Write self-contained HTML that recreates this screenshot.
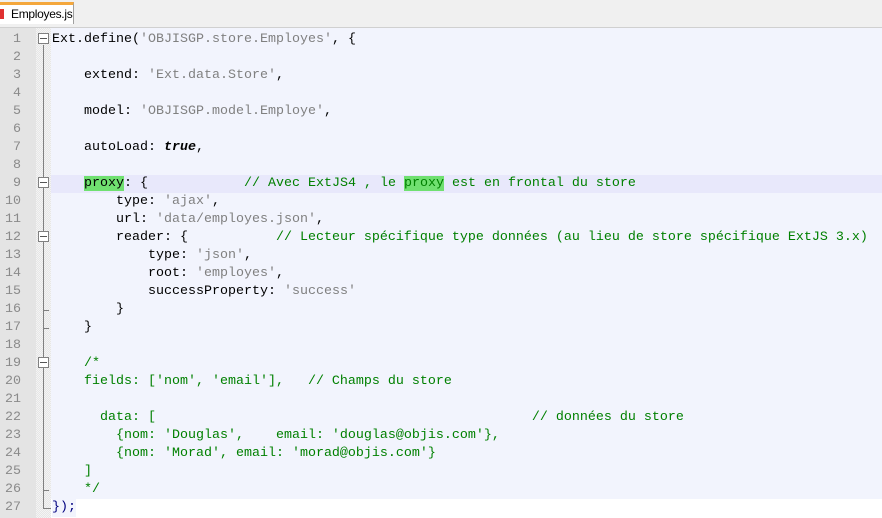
<!DOCTYPE html>
<html><head><meta charset="utf-8"><style>
body{margin:0;width:882px;height:518px;overflow:hidden;background:#fff;position:relative;font-family:"Liberation Mono",monospace}
.tabbar{position:absolute;left:0;top:0;width:882px;height:28px;background:#f0f0f0;border-bottom:1px solid #d0d0d0;box-sizing:border-box}
.tab{position:absolute;left:-1px;top:2px;width:75px;height:22px;background:#fff;border:1px solid #a0a0a0;border-top:3px solid #f4a73c;border-bottom:none;box-sizing:border-box;font:12px "Liberation Sans",sans-serif;line-height:18px;padding-left:11px;letter-spacing:-0.3px}
.tab i{position:absolute;left:0;top:4px;width:4px;height:10px;background:#e03030}
.gut{position:absolute;left:0;top:28px;width:36px;height:490px;background:#e4e4e4}
.fold{position:absolute;left:36px;top:28px;width:15px;height:490px;background-color:#f4f4f4;background-image:linear-gradient(45deg,#e6e6e6 25%,transparent 25%,transparent 75%,#e6e6e6 75%),linear-gradient(45deg,#e6e6e6 25%,transparent 25%,transparent 75%,#e6e6e6 75%);background-size:2px 2px;background-position:0 0,1px 1px}
.code{position:absolute;left:51px;top:28px;width:831px;height:471px;background:#f2f4fd}
.l{position:absolute;left:0;height:18px;line-height:18px;font-size:13.33px;white-space:pre;width:882px}
.n{position:absolute;left:0;width:21px;text-align:right;color:#8a8a8a;font-size:13.33px;line-height:18px}
.t{position:absolute;left:52px;color:#000}
.s{color:#808080}.c{color:#008000}.k{font-weight:bold;font-style:italic}
.hl{background:#70e070}
.box{position:absolute;left:38px;width:11px;height:11px;border:1px solid #808080;background:#fff;box-sizing:border-box}
.box:after{content:"";position:absolute;left:1px;top:4px;width:7px;height:1px;background:#555}
.vl{position:absolute;left:43px;width:1px;background:#808080}
</style></head><body>
<div class="tabbar"><div class="tab"><i></i>Employes.js</div></div>
<div class="gut"></div><div class="fold"></div>
<div class="code"></div>
<div style="position:absolute;left:51px;top:175px;width:831px;height:18px;background:#e8e8fb"></div>
<div class="vl" style="top:45px;height:463px"></div>
<div class="vl" style="top:508px;height:1px;width:8px"></div>
<div class="vl" style="top:328px;height:1px;width:6px"></div>
<div class="vl" style="top:310px;height:1px;width:6px"></div>
<div class="vl" style="top:490px;height:1px;width:6px"></div>
<div class="box" style="top:33px"></div>
<div class="box" style="top:177px"></div>
<div class="box" style="top:231px"></div>
<div class="box" style="top:357px"></div>

<div class="l" style="top:31px"><span class="n">1</span><span class="t">Ext.define(<span class="s">'OBJISGP.store.Employes'</span>, {</span></div>
<div class="l" style="top:49px"><span class="n">2</span></div>
<div class="l" style="top:67px"><span class="n">3</span><span class="t">    extend: <span class="s">'Ext.data.Store'</span>,</span></div>
<div class="l" style="top:85px"><span class="n">4</span></div>
<div class="l" style="top:103px"><span class="n">5</span><span class="t">    model: <span class="s">'OBJISGP.model.Employe'</span>,</span></div>
<div class="l" style="top:121px"><span class="n">6</span></div>
<div class="l" style="top:139px"><span class="n">7</span><span class="t">    autoLoad: <span class="k">true</span>,</span></div>
<div class="l" style="top:157px"><span class="n">8</span></div>
<div class="l" style="top:175px"><span class="n">9</span><span class="t">    <span class="hl">proxy</span>: {            <span class="c">// Avec ExtJS4 , le <span class="hl">proxy</span> est en frontal du store</span></span></div>
<div class="l" style="top:193px"><span class="n">10</span><span class="t">        type: <span class="s">'ajax'</span>,</span></div>
<div class="l" style="top:211px"><span class="n">11</span><span class="t">        url: <span class="s">'data/employes.json'</span>,</span></div>
<div class="l" style="top:229px"><span class="n">12</span><span class="t">        reader: {           <span class="c">// Lecteur spécifique type données (au lieu de store spécifique ExtJS 3.x)</span></span></div>
<div class="l" style="top:247px"><span class="n">13</span><span class="t">            type: <span class="s">'json'</span>,</span></div>
<div class="l" style="top:265px"><span class="n">14</span><span class="t">            root: <span class="s">'employes'</span>,</span></div>
<div class="l" style="top:283px"><span class="n">15</span><span class="t">            successProperty: <span class="s">'success'</span></span></div>
<div class="l" style="top:301px"><span class="n">16</span><span class="t">        }</span></div>
<div class="l" style="top:319px"><span class="n">17</span><span class="t">    }</span></div>
<div class="l" style="top:337px"><span class="n">18</span></div>
<div class="l" style="top:355px"><span class="n">19</span><span class="t c">    /*</span></div>
<div class="l" style="top:373px"><span class="n">20</span><span class="t c">    fields: ['nom', 'email'],   // Champs du store</span></div>
<div class="l" style="top:391px"><span class="n">21</span></div>
<div class="l" style="top:409px"><span class="n">22</span><span class="t c">      data: [                                               // données du store</span></div>
<div class="l" style="top:427px"><span class="n">23</span><span class="t c">        {nom: 'Douglas',    email: 'douglas@objis.com'},</span></div>
<div class="l" style="top:445px"><span class="n">24</span><span class="t c">        {nom: 'Morad', email: 'morad@objis.com'}</span></div>
<div class="l" style="top:463px"><span class="n">25</span><span class="t c">    ]</span></div>
<div class="l" style="top:481px"><span class="n">26</span><span class="t c">    */</span></div>
<div class="l" style="top:499px"><span class="n">27</span><span class="t" style="color:#000080;background:#f2f4fd">});</span></div>
</body></html>
